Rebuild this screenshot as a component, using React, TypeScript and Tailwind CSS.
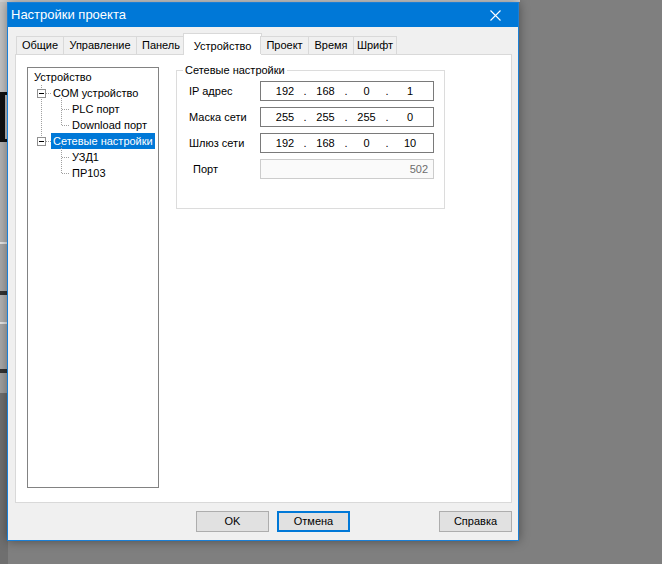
import React from "react";

function TreeLines() {
  return (
    <svg className="absolute left-0 top-0 pointer-events-none" width="130" height="120" shapeRendering="crispEdges">
      <g stroke="#a0a0a0" strokeDasharray="1 1" strokeWidth="1">
        <line x1="13.5" y1="17" x2="13.5" y2="69" />
        <line x1="18" y1="25.5" x2="23" y2="25.5" />
        <line x1="18" y1="73.5" x2="23" y2="73.5" />
        <line x1="33.5" y1="30" x2="33.5" y2="57" />
        <line x1="34" y1="41.5" x2="42" y2="41.5" />
        <line x1="34" y1="57.5" x2="42" y2="57.5" />
        <line x1="33.5" y1="78" x2="33.5" y2="105" />
        <line x1="34" y1="89.5" x2="42" y2="89.5" />
        <line x1="34" y1="105.5" x2="42" y2="105.5" />
      </g>
      <g>
        <rect x="9.5" y="21.5" width="8" height="8" fill="#fff" stroke="#919191" />
        <line x1="11" y1="25.5" x2="16" y2="25.5" stroke="#000" />
        <rect x="9.5" y="69.5" width="8" height="8" fill="#fff" stroke="#919191" />
        <line x1="11" y1="73.5" x2="16" y2="73.5" stroke="#000" />
      </g>
    </svg>
  );
}

function IpField({ parts }: { parts: string[] }) {
  return (
    <div className="flex h-[20px] w-[174px] items-center border border-[#7a7a7a] bg-white pl-[4px]">
      <span className="w-[40px] text-center">{parts[0]}</span>
      <span className="-mx-[3px] w-[6px] text-center">.</span>
      <span className="w-[41px] text-center">{parts[1]}</span>
      <span className="-mx-[3px] w-[6px] text-center">.</span>
      <span className="w-[41px] text-center">{parts[2]}</span>
      <span className="-mx-[3px] w-[6px] text-center">.</span>
      <span className="w-[46px] text-center">{parts[3]}</span>
    </div>
  );
}

export default function App() {
  const tabs = ["Общие", "Управление", "Панель", "Устройство", "Проект", "Время", "Шрифт"];
  const widths = ["w-[47px]", "w-[73px]", "w-[49px]", "w-[79px]", "w-[48px]", "w-[45px]", "w-[44px]"];
  return (
    <div className="relative h-[564px] w-[662px] overflow-hidden whitespace-nowrap bg-[#7f7f7f] font-['Liberation_Sans',Arial,sans-serif] text-[11px] text-black">
      {/* background application on the left */}
      <div className="absolute left-0 top-0 flex h-[564px] w-[8px] flex-col">
        <div className="h-[92px] bg-[#c4c4c4]" />
        <div className="h-[50px] border-y-[3px] border-l-[5px] border-[#111] bg-[#bdbdbd]" />
        <div className="h-[100px] bg-[#b3b3b3]" />
        <div className="h-[53px] border-t-2 border-b-[4px] border-t-[#e8e8e8] border-b-[#333] bg-[#a9a9a9]" />
        <div className="h-[27px] bg-[#b3b3b3]" />
        <div className="h-[51px] border-t-2 border-b-[4px] border-t-[#e8e8e8] border-b-[#333] bg-[#a9a9a9]" />
        <div className="h-[20px] bg-[#a0a0a0]" />
        <div className="flex-1 bg-[#6f6f6f]" />
      </div>
      <div className="absolute left-0 top-0 h-[2px] w-[520px] bg-[#cfcfcf]" />

      {/* dialog */}
      <div className="absolute left-[7px] top-[2px] flex h-[539px] w-[512px] flex-col border border-[#1a7fd6] bg-[#f0f0f0] shadow-[0_0_10px_rgba(0,0,0,0.4)]">
        <div className="flex h-[24px] items-center justify-between bg-[#0078d7] pl-[3px] text-[13px] text-white">
          <span>Настройки проекта</span>
          <svg width="46" height="24" viewBox="0 0 46 24">
            <path d="M18.5 7.5 L28.5 17.5 M28.5 7.5 L18.5 17.5" stroke="#fff" strokeWidth="1.1" />
          </svg>
        </div>

        {/* tabs */}
        <div className="relative z-10 mt-[6px] flex h-[21px] items-end pl-[8px]">
          {tabs.map((t, i) =>
            i === 3 ? (
              <div
                key={t}
                className={`-mx-[2px] -mb-px flex h-[22px] ${widths[i]} items-start justify-center border-x border-t border-[#d9d9d9] bg-white pt-[4px]`}
              >
                {t}
              </div>
            ) : (
              <div
                key={t}
                className={`flex h-[18px] ${widths[i]} items-center justify-center border-l border-t border-[#d9d9d9] bg-[#f0f0f0] ${i === 6 ? "border-r" : ""}`}
              >
                {t}
              </div>
            )
          )}
        </div>

        {/* tab page */}
        <div className="mx-[7px] flex h-[449px] w-[497px] border border-[#d9d9d9] bg-white pl-[11px] pt-[12px]">
          <div className="relative h-[421px] w-[132px] border border-[#828282] bg-white pt-px">
            <TreeLines />
            <div className="flex h-[16px] items-center pl-[6px]">Устройство</div>
            <div className="flex h-[16px] items-center pl-[25px]">COM устройство</div>
            <div className="flex h-[16px] items-center pl-[44px]">PLC порт</div>
            <div className="flex h-[16px] items-center pl-[44px]">Download порт</div>
            <div className="flex h-[16px] items-center pl-[23px]">
              <span className="flex h-[16px] items-center bg-[#0078d7] px-[2px] text-white">Сетевые настройки</span>
            </div>
            <div className="flex h-[16px] items-center pl-[44px]">УЗД1</div>
            <div className="flex h-[16px] items-center pl-[44px]">ПР103</div>
          </div>

          <div className="relative ml-[17px] mt-[3px] h-[139px] w-[269px] border border-[#dcdcdc] pt-[10px]">
            <span className="absolute -top-[9px] left-[6px] bg-white px-[2px] leading-[16px]">Сетевые настройки</span>
            <div className="flex h-[20px] items-center">
              <span className="w-[83px] pl-[12px]">IP адрес</span>
              <IpField parts={["192", "168", "0", "1"]} />
            </div>
            <div className="mt-[6px] flex h-[20px] items-center">
              <span className="w-[83px] pl-[12px]">Маска сети</span>
              <IpField parts={["255", "255", "255", "0"]} />
            </div>
            <div className="mt-[6px] flex h-[20px] items-center">
              <span className="w-[83px] pl-[12px]">Шлюз сети</span>
              <IpField parts={["192", "168", "0", "10"]} />
            </div>
            <div className="mt-[6px] flex h-[20px] items-center">
              <span className="w-[83px] pl-[16px]">Порт</span>
              <div className="flex h-[20px] w-[174px] items-center justify-end border border-[#cccccc] bg-[#fafafa] pr-[5px] text-[#6d6d6d]">
                502
              </div>
            </div>
          </div>
        </div>

        {/* buttons */}
        <div className="mt-[8px] flex pl-[188px]">
          <button className="flex h-[21px] w-[73px] items-center justify-center border border-[#adadad] bg-[#e1e1e1]">OK</button>
          <button className="ml-[8px] flex h-[21px] w-[73px] items-center justify-center border-2 border-[#0078d7] bg-[#e1e1e1]">Отмена</button>
          <button className="ml-[89px] flex h-[21px] w-[73px] items-center justify-center border border-[#adadad] bg-[#e1e1e1]">Справка</button>
        </div>
      </div>
    </div>
  );
}
